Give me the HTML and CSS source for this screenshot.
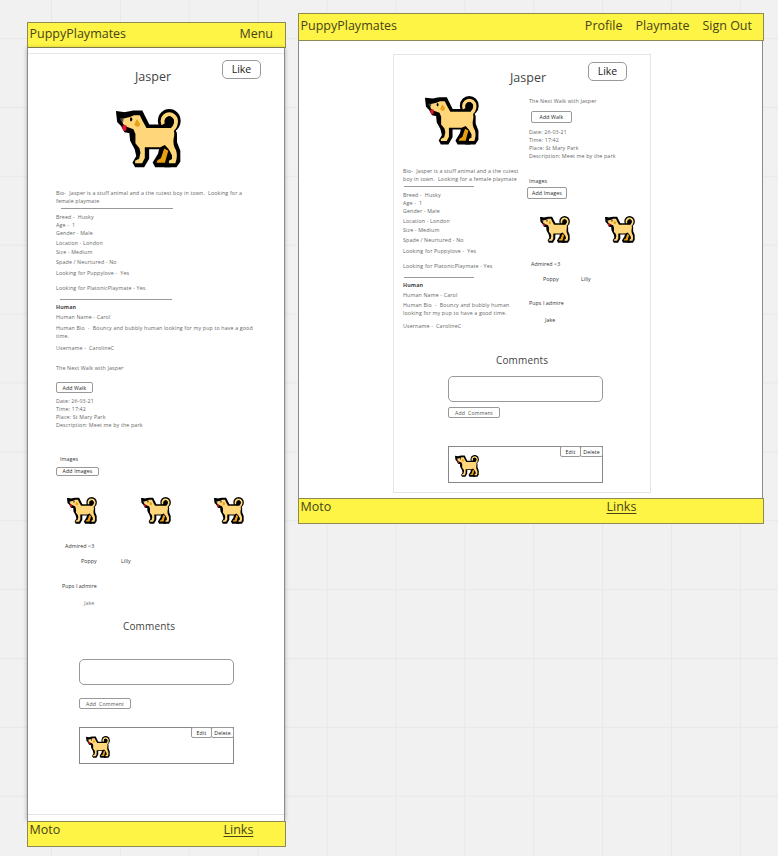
FILE: index.html
```html
<!DOCTYPE html>
<html lang="en">
<head>
<meta charset="utf-8">
<title>PuppyPlaymates</title>
<link rel="stylesheet" href="styles.css">
</head>
<body>
<svg class="defs" aria-hidden="true">
  <symbol id="dog" viewBox="34 33 194 170" preserveAspectRatio="none">
    <g fill="#000" stroke="#000" stroke-width="18" stroke-linejoin="miter" stroke-miterlimit="2">
      <path d="M44 49L60 51L76 48L87 46H107L128 87H200L207 105V130L217 155V182L210 192H190L196 168L178 140H124V174L113 192H91L104 170L98 145L85 122L82 95L65 92L56 76L46 66Z"/>
      <path d="M151 192H188L190 150L174 140L168 165Z"/>
    </g>
    <circle cx="193" cy="67" r="34"/>
    <path d="M178 147L190 153L180 188H155L158 181L168 175Z" fill="#e89e0d"/>
    <path d="M51 62L75 56L88 51H105L113 67L125 88H196C207 88 211 102 206 118C204 131 206 139 213 152C218 165 215 181 211 189H192V182L201 177V166L192 150L180 137L166 143H120V174L112 189H91V182L103 176L107 159L104 146L92 132V105L86 91L66 84L55 76Z" fill="#ffd679"/>
    <path d="M201 93Q213 83 213 68A20 20 0 1 0 175 77" fill="none" stroke="#ffd679" stroke-width="12"/>
    <path d="M179 68A14 14 0 1 1 203 78L193 85H180Z"/>
    <path d="M96 62L105 74C108 87 91 87 89 77Z" fill="#e8a112"/>
    <path d="M77 57q6 0 6 6q-1 6-5 6q-4-5-1-12Z"/>
    <path d="M46 60H56V68H49Z" fill="#454b50"/>
    <path d="M54 80H65V92Q63 98 57 96Q51 91 54 80Z" fill="#e8112d"/>
  </symbol>
</svg>

<main class="board">
  <section class="frame mobile">
    <header class="bar"><span class="brand">PuppyPlaymates</span><span class="menu">Menu</span></header>
    <div class="page">
      <div class="hero"><h1>Jasper</h1><button class="like">Like</button></div>
      <svg class="portrait"><use href="#dog"/></svg>
      <div class="info">
        <p class="bio">Bio-&nbsp; Jasper is a stuff animal and a the cutest boy in town.&nbsp; Looking for a<br>female playmate</p>
        <hr>
        <p class="breed">Breed -&nbsp; Husky</p>
        <p>Age -&nbsp; 1</p>
        <p>Gender - Male</p>
        <p class="location">Location - London</p>
        <p class="size">Size - Medium</p>
        <p class="spade">Spade / Neurtured - No</p>
        <p class="love">Looking for Puppylove -&nbsp; Yes</p>
        <p class="platonic">Looking for PlatonicPlaymate - Yes</p>
        <hr class="second">
        <h2>Human</h2>
        <p class="name">Human Name - Carol</p>
        <p class="human-bio">Human Bio&nbsp; -&nbsp; Bouncy and bubbly human looking for my pup to have a good<br>time.</p>
        <p class="username">Username -&nbsp; CarolineC</p>
      </div>
      <div class="walk">
        <p>The Next Walk with Jasper</p>
        <button class="small add-walk">Add Walk</button>
        <p>Date: 26-03-21</p>
        <p>Time: 17:42</p>
        <p>Place: St Mary Park</p>
        <p>Description: Meet me by the park</p>
      </div>
      <div class="social">
        <p class="images-title">Images</p>
        <button class="small add-images">Add Images</button>
        <div class="gallery"><svg><use href="#dog"/></svg><svg><use href="#dog"/></svg><svg><use href="#dog"/></svg></div>
        <p class="admired">Admired &lt;3</p>
        <div class="pups"><p>Poppy</p><p>Lilly</p></div>
        <p class="admire">Pups I admire</p>
        <p class="jake">Jake</p>
      </div>
      <div class="comments">
        <h3>Comments</h3>
        <div class="field"></div>
        <button class="small add-comment">Add&nbsp; Comment</button>
        <article class="comment"><svg><use href="#dog"/></svg><div class="actions"><button class="small edit">Edit</button><button class="small delete">Delete</button></div></article>
      </div>
    </div>
    <footer class="bar"><span class="moto">Moto</span><a class="links">Links</a></footer>
  </section>

  <section class="frame desktop">
    <header class="bar"><span class="brand">PuppyPlaymates</span><nav><span>Profile</span><span>Playmate</span><span>Sign Out</span></nav></header>
    <div class="page">
      <div class="sheet">
        <div class="hero"><h1>Jasper</h1><button class="like">Like</button></div>
        <div class="columns">
          <div class="left">
            <svg class="portrait"><use href="#dog"/></svg>
            <div class="info">
              <p class="bio">Bio-&nbsp; Jasper is a stuff animal and a the cutest<br>boy in town.&nbsp; Looking for a female playmate</p>
              <hr>
              <p class="breed">Breed -&nbsp; Husky</p>
              <p>Age -&nbsp; 1</p>
              <p>Gender - Male</p>
              <p class="location">Location - London</p>
              <p class="size">Size - Medium</p>
              <p class="spade">Spade / Neurtured - No</p>
              <p class="love">Looking for Puppylove -&nbsp; Yes</p>
              <p class="platonic">Looking for PlatonicPlaymate - Yes</p>
              <hr class="second">
              <h2>Human</h2>
              <p class="name">Human Name - Carol</p>
              <p class="human-bio">Human Bio&nbsp; -&nbsp; Bouncy and bubbly human<br>looking for my pup to have a good time.</p>
              <p class="username">Username -&nbsp; CarolineC</p>
            </div>
          </div>
          <div class="right">
            <div class="walk">
              <p>The Next Walk with Jasper</p>
              <button class="small add-walk">Add Walk</button>
              <p>Date: 26-03-21</p>
              <p>Time: 17:42</p>
              <p>Place: St Mary Park</p>
              <p>Description: Meet me by the park</p>
            </div>
            <div class="social">
              <p class="images-title">Images</p>
              <button class="small add-images">Add Images</button>
              <div class="gallery"><svg><use href="#dog"/></svg><svg><use href="#dog"/></svg></div>
              <p class="admired">Admired &lt;3</p>
              <div class="pups"><p>Poppy</p><p>Lilly</p></div>
              <p class="admire">Pups I admire</p>
              <p class="jake">Jake</p>
            </div>
          </div>
        </div>
        <div class="comments">
          <h3>Comments</h3>
          <div class="field"></div>
          <button class="small add-comment">Add&nbsp; Comment</button>
          <article class="comment"><svg><use href="#dog"/></svg><div class="actions"><button class="small edit">Edit</button><button class="small delete">Delete</button></div></article>
        </div>
      </div>
    </div>
    <footer class="bar"><span class="moto">Moto</span><a class="links">Links</a></footer>
  </section>
</main>
</body>
</html>
```
FILE: styles.css
```css
* { box-sizing: border-box; }
body { margin: 0; font-family: "Open Sans", "Noto Sans", sans-serif; color: #444; }
h1, h2, h3, p, hr { margin: 0; font-weight: 400; }
svg { display: block; }
.defs { display: none; }

.board {
  position: relative;
  width: 778px;
  height: 856px;
  overflow: hidden;
  background-color: #f1f1f1;
  background-image:
    linear-gradient(90deg, #e8e8e8 1px, transparent 1px),
    linear-gradient(#e8e8e8 1px, transparent 1px);
  background-size: 68.9px 68.9px;
  background-position: 51px 38px;
}

.frame { position: absolute; display: flex; flex-direction: column; }
.mobile { left: 27px; top: 22px; width: 259px; height: 825px; }
.desktop { left: 298px; top: 13px; width: 466px; height: 511px; }

.bar {
  flex: none;
  height: 26px;
  border: 1px solid #8f8a55;
  background: #fef445;
  display: flex;
  padding-left: 1.5px;
  font-size: 12.5px;
  line-height: 16px;
  color: #46431c;
}
.page { flex: 1; min-height: 0; background: #fff; border: solid #8a8a8a; border-width: 0 1px; }
.mobile header.bar { line-height: 22px; }
.mobile .menu { margin-left: auto; padding-right: 12px; }
.mobile .page { margin-right: 1px; padding: 5px 0 0 28px; box-shadow: 0 0 4px rgba(0, 0, 0, .3); background: linear-gradient(#e8e8e8, #e8e8e8) 0 5px / 100% 1px no-repeat, linear-gradient(#e4e4e4, #e4e4e4) 0 766px / 100% 1px no-repeat, #fff; }
.moto { width: 33px; }
.links { text-decoration: underline; text-underline-offset: 2px; text-decoration-thickness: 1px; }
.mobile .links { margin-left: 161px; }
.desktop header.bar { height: 28px; line-height: 23px; }
.desktop nav { margin-left: auto; display: flex; gap: 13px; padding-right: 11px; }
.desktop .links { margin-left: 273px; }
.desktop .page { padding: 13px 0 0 94px; margin-right: 1px; }
.sheet { width: 258px; height: 439px; border: 1px solid #e4e4e4; padding-left: 9px; }

.hero { display: flex; align-items: flex-start; }
h1 { font-size: 12.5px; line-height: 17px; }
.mobile h1 { margin: 15px 0 0 79px; width: 87px; }
.mobile .hero { height: 56px; }
.desktop h1 { margin: 14px 0 0 107px; width: 78px; }
.desktop .hero { height: 41px; }
button { display: block; padding: 0; margin: 0; font-family: inherit; color: #222; background: #fff; border: 1px solid #999; text-align: center; }
.like { width: 39px; height: 19px; border-radius: 5px; font-size: 10.5px; line-height: 15px; margin-top: 7px; }
.small { height: 11px; border-radius: 2px; font-size: 5.2px; line-height: 8px; white-space: nowrap; letter-spacing: .15px; }

p, h2 { font-size: 5.3px; line-height: 8px; letter-spacing: .14px; color: #666; white-space: nowrap; }
h2 { font-weight: 700; color: #444; }
hr { border: 0; height: 1px; background: #999; width: 112px; }
.social p { color: #333; letter-spacing: .06px; }

.mobile .portrait { width: 65px; height: 59px; margin: 0 0 22px 60px; }
.mobile .bio { line-height: 7.5px; }
.mobile hr { margin: 3px 0 0 5px; }
.mobile .breed { margin-top: 4px; }
.mobile .location { margin-top: 2px; }
.size { margin-top: 1px; }
.spade { margin-top: 1.5px; }
.love { margin-top: 3.5px; }
.platonic { margin-top: 6.5px; }
.mobile hr.second { margin: 7.5px 0 0 4px; }
.mobile h2 { margin-top: 3px; }
.name { margin-top: 2px; }
.human-bio { margin-top: 2.5px; }
.username { margin-top: 4.5px; }
.mobile .walk { margin-top: 12px; }
.mobile .add-walk { width: 37px; margin: 10px 0 4px; }
.mobile .social { margin-top: 26px; }
.mobile .images-title { margin-left: 4px; }
.mobile .add-images { width: 43px; height: 9px; line-height: 6.5px; margin-top: 3.5px; }
.gallery { display: flex; }
.gallery svg { width: 30px; height: 27px; }
.mobile .gallery { margin: 21px 0 0 11px; gap: 43.5px; }
.mobile .admired { margin: 18px 0 0 9px; }
.pups { display: flex; }
.mobile .pups { margin: 7.5px 0 0 25px; }
.mobile .pups p { width: 40px; }
.mobile .admire { margin: 17px 0 0 6px; }
.mobile .jake { margin: 9px 0 0 28px; color: #777; }

h3 { font-size: 10px; line-height: 14px; letter-spacing: .15px; }
.field { width: 155px; height: 26px; border: 1px solid #999; border-radius: 5px; }
.add-comment { width: 52px; color: #555; }
.comment { width: 155px; height: 37px; border: 1px solid #888; display: flex; justify-content: space-between; }
.comment svg { width: 24px; height: 22px; margin: 8px 0 0 6px; }
.actions { display: flex; margin: -1px -1px 0 0; }
.edit { width: 21px; }
.delete { width: 23px; margin-left: -1px; }
.mobile .comments { margin: 12px 0 0 23px; }
.mobile h3 { margin-left: 44px; }
.mobile .field { margin-top: 26px; }
.mobile .add-comment { margin-top: 13px; }
.mobile .comment { margin-top: 18px; }

.columns { display: flex; height: 257px; }
.left { width: 124px; }
.desktop .portrait { width: 54px; height: 49px; margin: 0 0 22px 22px; }
.desktop hr { width: 70px; margin: 3px 0 0 1px; }
.desktop .breed { margin-top: 4px; }
.desktop .location { margin-top: 2px; }
.desktop hr.second { margin-top: 7px; }
.desktop h2 { margin-top: 3px; }
.right { padding-top: 1px; }
.right .walk { padding-left: 2px; }
.right .add-walk { width: 41px; height: 12px; line-height: 8px; margin: 6px 0 5px 2px; }
.right .social { margin-top: 17px; }
.right .images-title { margin-left: 2px; }
.right .add-images { width: 40px; height: 12px; line-height: 9px; margin-top: 2px; }
.right .gallery { margin: 17px 0 0 12.5px; gap: 35px; }
.right .admired { margin: 17px 0 0 4px; }
.right .pups { margin: 7px 0 0 16px; }
.right .pups p { width: 38px; }
.right .admire { margin: 16px 0 0 2px; }
.right .jake { margin: 9px 0 0 18px; }
.desktop .comments { margin-left: 45px; }
.desktop h3 { margin-left: 48px; }
.desktop .field { margin-top: 9px; }
.desktop .add-comment { margin-top: 5px; height: 11px; line-height: 8px; }
.desktop .comment { margin-top: 28px; }
```
